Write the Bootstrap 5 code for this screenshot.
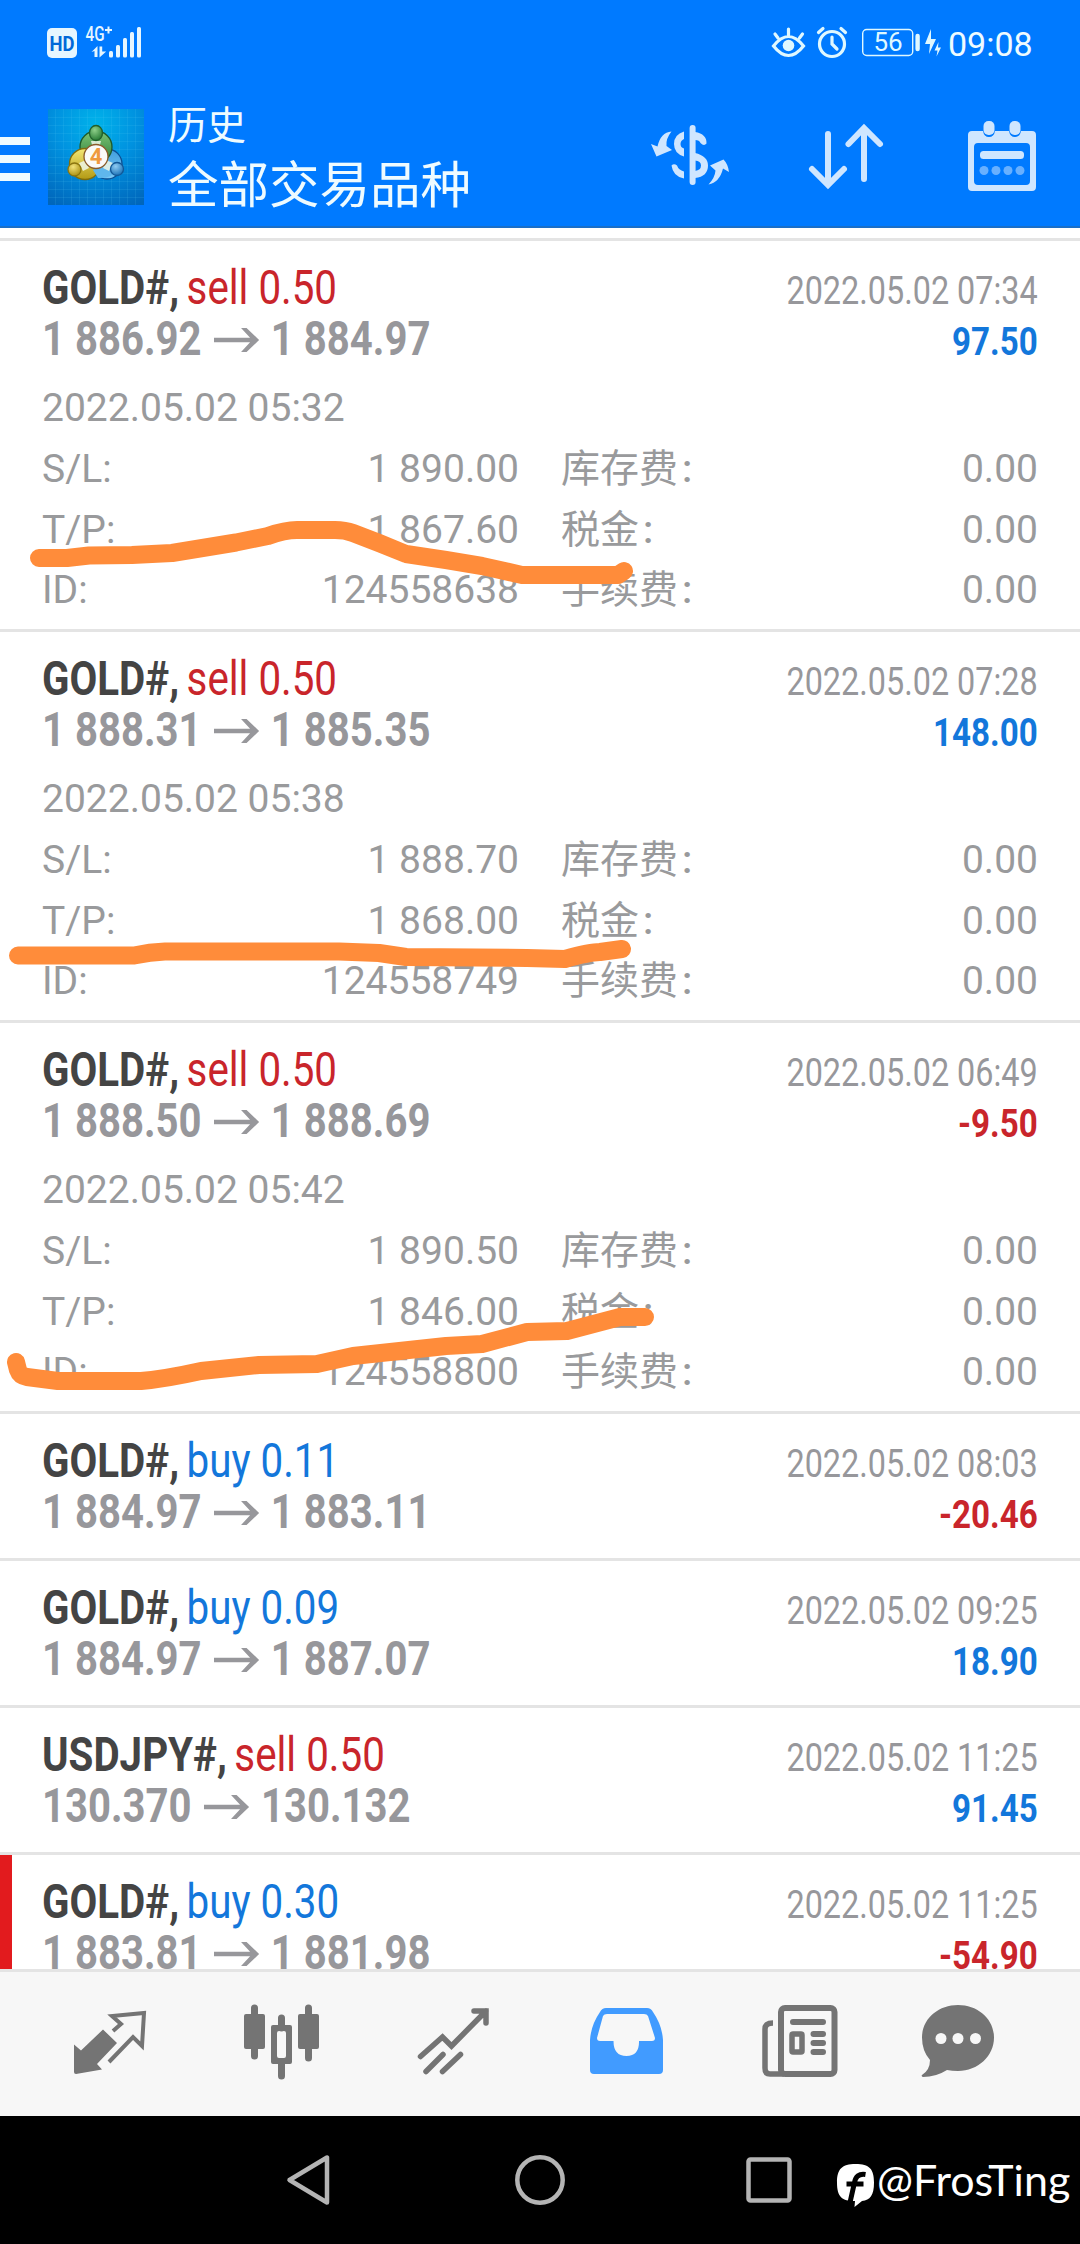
<!DOCTYPE html>
<html lang="zh-CN">
<head>
<meta charset="utf-8">
<meta name="viewport" content="width=device-width, initial-scale=1">
<title>历史</title>
<link href="https://cdn.jsdelivr.net/npm/bootstrap@5.3.0/dist/css/bootstrap.min.css" rel="stylesheet">
<style>
html,body{height:2244px;overflow:hidden}
body{font-family:Roboto,"Noto Sans CJK SC",sans-serif;background:#fff;color:#97979b;width:1080px}
svg{display:block;flex:none;overflow:visible}
.screen{height:2244px;width:1080px}
.topbar{background:#007aff;height:228px;border-bottom:2px solid #1a6fc8;color:#eefbff}
.statusbar{height:84px}
.clock-text{font-size:34px;line-height:1;padding:27px 0 0 2px}
.appbar{height:142px}
.titles{width:472px;padding-top:18px}
.t-small{font-size:39px;line-height:48px}
.t-big{font-size:50.5px;line-height:72px}
.list-area{height:1741px;overflow:hidden;padding-top:10px}
.deal{border-top:3px solid #e4e4e4;padding:21px 0 21px 42px;height:147px}
.deal.open{height:391px}
.deal.flagged{box-shadow:inset 12px 0 0 #e21b1e}
.head-l,.head-r{line-height:51px;white-space:nowrap}
.head-l{font-size:48px}
.sx{transform:scaleX(.84);transform-origin:0 0}
.side{margin-left:-3px}
.px{transform:scaleX(.835);transform-origin:0 0;font-weight:700}
.arrow{margin:0 14px 5px 15px}
.sym{font-weight:700;color:#444}
.sell{color:#c9252b}.buy{color:#1377db}
.head-r{font-size:39px;padding:4px 42px 0 0;text-align:right}
.dx{transform:scaleX(.83);transform-origin:100% 0}
.fx{transform:scaleX(.85);transform-origin:100% 0;font-weight:700}
.info{font-size:39px;line-height:60.75px;padding:10px 42px 0 0;color:#999a9c}
.info .col-half{width:477px}
.info .col-half+.col-half{margin-left:42px}
.colon{margin-left:4px;font-weight:500}
.tabs{height:147px;background:#f7f7f7;border-top:3px solid #e4e4e4;padding-left:24px}
.sysbar{height:128px;background:#000}
.wm{font-family:Lato,sans-serif;color:#fff;font-size:43px;line-height:1;white-space:nowrap;padding-top:42px;margin-left:-3px}
.marker{left:0;top:0;pointer-events:none}
</style>
</head>
<body>
<div class="screen d-flex flex-column position-relative">
<header class="topbar flex-shrink-0">
  <div class="statusbar d-flex">
    <svg width="760" height="84" viewBox="0 0 760 84" fill="#e6f6ff">
      <rect x="47" y="28" width="30" height="30" rx="5"/>
      <text x="62" y="50.500" font-size="20" font-weight="700" text-anchor="middle" textLength="25" lengthAdjust="spacingAndGlyphs" fill="#0068d8">HD</text>
      <text x="85.500" y="41" font-size="20" font-weight="500" textLength="19" lengthAdjust="spacingAndGlyphs">4G</text>
      <path d="M105 30h7M108.500 26.500v7" stroke="#e6f6ff" stroke-width="2"/>
      <path d="M91.500 52l6-6v11h-3v-6zM99.500 46.500h2.700v5h4l-6.700 6z"/>
      <rect x="109" y="51" width="4" height="6.500" rx="1.500"/><rect x="116" y="45" width="4" height="12.500" rx="1.500"/><rect x="123" y="38" width="4" height="19.500" rx="1.500"/><rect x="130" y="32" width="4" height="25.500" rx="1.500"/><rect x="137" y="27" width="4" height="30.500" rx="1.500"/>
    </svg>
    <svg width="186" height="84" viewBox="760 0 186 84" fill="none" stroke="#dff8ff" stroke-width="3.200" stroke-linecap="round">
      <path d="M773.500 46q15-19 30 0q-15 19-30 0zM775 34l3 4M788.500 29v6M802.500 34l-3 4"/>
      <circle cx="788.500" cy="45.500" r="5.800" fill="#dff8ff" stroke="none"/>
      <circle cx="832" cy="44" r="12.500"/><path d="M832 37v7l5 5M818.500 32.500l4.500-4M845.500 32.500l-4.500-4"/>
      <rect x="862.700" y="29.500" width="50" height="26" rx="4" stroke-width="1.400"/>
      <path d="M917.600 36v13" stroke-width="4.400"/>
      <text x="888" y="51" font-size="26" text-anchor="middle" fill="#dff8ff" stroke="none">56</text>
      <path d="M931 29l-6 15h5l-1 10 7-15h-5zM938.500 42l-4 8.500h3l-1 6 4.500-9h-3z" fill="#dff8ff" stroke="none"/>
    </svg>
    <div class="clock-text">09:08</div>
  </div>
  <div class="appbar d-flex">
    <svg width="168" height="142" viewBox="0 84 168 142">
      <defs>
        <radialGradient id="bgl" cx=".5" cy=".15" r=".95"><stop offset="0" stop-color="#00b2ea"/><stop offset=".45" stop-color="#0092e0"/><stop offset="1" stop-color="#0066bb"/></radialGradient>
        <linearGradient id="gg" x1="0" y1="0" x2="0" y2="1"><stop offset="0" stop-color="#7cc576"/><stop offset="1" stop-color="#2c7c38"/></linearGradient>
        <linearGradient id="gy" x1="0" y1="0" x2="0" y2="1"><stop offset="0" stop-color="#f3e673"/><stop offset="1" stop-color="#b39a14"/></linearGradient>
        <linearGradient id="gb" x1="0" y1="0" x2="0" y2="1"><stop offset="0" stop-color="#3f9ddd"/><stop offset="1" stop-color="#7cc9f4"/></linearGradient>
        <radialGradient id="hg" cx=".4" cy=".3" r=".7"><stop offset="0" stop-color="#8fd08a"/><stop offset="1" stop-color="#2a7c36"/></radialGradient>
        <radialGradient id="hy" cx=".4" cy=".3" r=".7"><stop offset="0" stop-color="#f2e27a"/><stop offset="1" stop-color="#ae9213"/></radialGradient>
        <radialGradient id="hb" cx=".4" cy=".3" r=".7"><stop offset="0" stop-color="#8fcbf2"/><stop offset="1" stop-color="#1e74b8"/></radialGradient>
      </defs>
      <path d="M0 137h30v8H0zM0 155h30v8H0zM0 173h30v8H0z" fill="#eefbff"/>
      <rect x="48" y="109" width="96" height="96" fill="url(#bgl)"/>
      <path d="M55.500 109v96M63.500 109v96M71.500 109v96M79.500 109v96M87.500 109v96M95.500 109v96M103.500 109v96M111.500 109v96M119.500 109v96M127.500 109v96M135.500 109v96M48 117.500h96M48 125.500h96M48 133.500h96M48 141.500h96M48 149.500h96M48 157.500h96M48 165.500h96M48 173.500h96M48 181.500h96M48 189.500h96M48 197.500h96" stroke="#5cd0f5" stroke-opacity=".13"/>
      <g stroke-width="1.300">
        <circle cx="107" cy="164" r="15" fill="url(#gb)" stroke="#0d4f93"/>
        <circle cx="96" cy="147" r="16" fill="url(#gg)" stroke="#1e5a2a"/>
        <circle cx="85" cy="164" r="15.500" fill="url(#gy)" stroke="#806d0c"/>
        <path d="M93 170l5 8q14 1 19-9l-9-9z" fill="#5fb6ec" stroke="none"/>
        <path d="M91 141h10l-2 8h-6zM79 163l4 8 6-3-3-8zM113 163l-4 8-6-3 3-8z" fill="#eef7e8" stroke="none" opacity=".85"/>
        <ellipse cx="96" cy="133" rx="6.500" ry="7.500" fill="url(#hg)" stroke="#215f2c"/>
        <circle cx="74.500" cy="169.500" r="6.500" fill="url(#hy)" stroke="#8b7510"/>
        <circle cx="117" cy="169" r="6.500" fill="url(#hb)" stroke="#125796"/>
        <circle cx="96" cy="156.500" r="12" fill="#fafaf8" stroke="#8a5b2a"/>
      </g>
      <text x="96" y="164" font-size="22" font-weight="700" text-anchor="middle" fill="#ef9a3e">4</text>
    </svg>
    <div class="titles d-flex flex-column">
      <div class="t-small">历史</div><div class="t-big">全部交易品种</div>
    </div>
    <svg width="440" height="142" viewBox="640 84 440 142" fill="none" stroke="#cfe6ff" stroke-width="6" stroke-linecap="round">
      <path d="M692.600 128v54"/>
      <path d="M684 131.500q-10 3-10 12.500t10 12.500v-8q-3.500-1-3.500-4.500t3.500-5zM671.500 165.500q2.500-2.500 5.500 0 1.500 4.500 7 6v7q-11-2-12.500-13z" fill="#cfe6ff" stroke="none"/>
      <path d="M695 132q12 2 11.500 11.500-2.500 3-6-.5-1-3-5.500-3zM695 153q13 3 13 12.500 0 11-13 12.500v-7q6-1 6-5.500t-6-5z" fill="#cfe6ff" stroke="none"/>
      <path d="M671.500 131.500q-11 1-14 15l-6.500-2.500 5.500 12.500 15.500-6.500-5.500-4q-1-7 5-14.500zM708.500 184.500q11-2 14.500-16l6 3.500q-1-8-5.500-12.500l-13.500 6 5.500 5q-.5 7-7 14z" fill="#cfe6ff" stroke="none"/>
      <path d="M828 134v50M812 169l16 16 16-16M864 179v-50M848.500 144l15.500-16 16 16"/>
      <g fill="#cfe6ff" stroke="none">
        <path fill-rule="evenodd" d="M972 131h11q1 6 6 6t6-6h14q1 6 6 6t6-6h11q4 0 4 4v52q0 4-4 4h-60q-4 0-4-4v-52q0-4 4-4zM978 143q-4 0-4 4v34q0 4 4 4h48q4 0 4-4v-34q0-4-4-4z"/>
        <rect x="983.500" y="121" width="11" height="14" rx="5"/><rect x="1009.500" y="121" width="11" height="14" rx="5"/>
        <rect x="980" y="151" width="44" height="8" rx="3.500"/>
        <g opacity=".5"><circle cx="984" cy="170.500" r="4.500"/><circle cx="996" cy="170.500" r="4.500"/><circle cx="1008" cy="170.500" r="4.500"/><circle cx="1020" cy="170.500" r="4.500"/></g>
      </g>
    </svg>
  </div>
</header>
<main class="list-area flex-shrink-0" id="deals"></main>
<nav class="tabs d-flex flex-shrink-0">
  <svg width="172" height="144" viewBox="24 1972 172 144" fill="#747474">
    <path d="M103 2029.500L117 2043 97 2064l5 5.500L76 2074q-2 0-2-2V2044.500l7 6z"/>
    <path d="M113 2031l8-7-9-8 32-3-2 33-9-9-24 25" fill="none" stroke="#747474" stroke-width="4"/>
  </svg>
  <svg width="172" height="144" viewBox="196 1972 172 144" fill="#747474">
    <rect x="244" y="2014" width="21" height="35" rx="2"/><rect x="298" y="2014" width="21" height="35" rx="2"/>
    <path d="M254.500 2008v48M308.500 2008v50M281.500 2018v10M281.500 2062v14" stroke="#747474" stroke-width="7" stroke-linecap="round"/>
    <path fill-rule="evenodd" d="M273 2025h17q2 0 2 2v35q0 2-2 2h-17q-2 0-2-2v-35q0-2 2-2zM279 2031q-2 0-2 2v23q0 2 2 2h5q2 0 2-2v-23q0-2-2-2z"/>
  </svg>
  <svg width="172" height="144" viewBox="368 1972 172 144" fill="none" stroke="#747474" stroke-width="5.500" stroke-linecap="round">
    <path d="M420.500 2056.500L442.500 2037l9 9L486 2011M474 2011h12v12"/><path d="M426 2071.500l17-17M442.500 2071.500l18-17" />
  </svg>
  <svg width="172" height="144" viewBox="540 1972 172 144" fill="#419bff">
    <path fill-rule="evenodd" d="M606 2008h41q4 0 6 4 9 13 10 28v30q0 4-4 4h-65q-4 0-4-4v-30q1-15 10-28 2-4 6-4zM607 2014q-3 0-4 2l-6 22q0 3 3 3h13.500q0 15 13 15t12.500-15h13q3 0 3-3l-7-22q-1-2-4-2z"/>
  </svg>
  <svg width="172" height="144" viewBox="712 1972 172 144" fill="none" stroke="#747474">
    <rect x="781" y="2008" width="53.500" height="66" rx="4" stroke-width="6"/>
    <path d="M773 2023q-8 0-8 6v39q0 6 5 6h14" stroke-width="5.500"/>
    <path d="M793 2022h30M813.500 2034h9.500M813.500 2043h9.500M813.500 2052h9.500" stroke-width="6" stroke-linecap="round"/>
    <rect x="792" y="2034" width="10" height="18" rx="1" stroke-width="5.500"/>
  </svg>
  <svg width="172" height="144" viewBox="884 1972 172 144">
    <path fill="#747474" d="M958 2005c20 0 36 14 36 32.500S978 2071 958 2071q-6 0-11-1-11 7-24 7-2-1-1-2 8-5 8-15-8-9-8-22.500C922 2019 938 2005 958 2005z"/>
    <g fill="#f7f7f7"><circle cx="941" cy="2038.500" r="5.500"/><circle cx="958" cy="2038.500" r="5.500"/><circle cx="975.500" cy="2038.500" r="5.500"/></g>
  </svg>
</nav>
<footer class="sysbar d-flex flex-shrink-0">
  <svg width="880" height="128" viewBox="0 2116 880 128" fill="none" stroke="#b4b4b4" stroke-width="4.500" stroke-linejoin="round">
    <path d="M289.500 2180L327 2157.500v45z"/><circle cx="540" cy="2180" r="22.700"/><rect x="748.500" y="2159.500" width="41" height="41" rx="2"/>
    <path fill="#fff" stroke="none" d="M855.500 2164c14 0 18.500 5 18.500 18.500 0 13-4 17.500-12 18.500l-7.500 6 .5-6c-13 0-18-4-18-18.500 0-13.500 5-18.500 18.500-18.500z"/>
    <path d="M865.500 2174.500q-9.500-1.500-11 8l-4.500 20M846.500 2184h17" stroke="#000" stroke-width="5"/>
  </svg>
  <div class="wm">@FrosTing</div>
</footer>
<svg class="marker position-absolute" width="1080" height="1500" viewBox="0 0 1080 1500" fill="none" stroke="#ff8c3a" stroke-width="18" stroke-linecap="round" stroke-linejoin="round">
  <path d="M39 558H67L89 555.500 132 555 172 553 236 542.500 268 536Q285 530 297 530H335Q345 530 353 533L379 543 406 554 446 560 482 566 522 575H618L624 571"/>
  <path d="M18 955.500H134Q150 952 165 951.500H339L379 953 406 957 527 958 565 959Q590 952 600 952L622 949"/>
  <path d="M16 1362L18 1370Q20 1376 27 1377L58 1381H141Q165 1379 201 1371L259 1365 317 1364 353 1356 446 1346 482 1344 527 1332 567 1331 620 1317H645"/>
</svg>
</div>
<script>
const deals=[
 ['GOLD#','sell','0.50','1 886.92','1 884.97','07:34','97.50',['05:32','1 890.00','1 867.60','124558638']],
 ['GOLD#','sell','0.50','1 888.31','1 885.35','07:28','148.00',['05:38','1 888.70','1 868.00','124558749']],
 ['GOLD#','sell','0.50','1 888.50','1 888.69','06:49','-9.50',['05:42','1 890.50','1 846.00','124558800']],
 ['GOLD#','buy','0.11','1 884.97','1 883.11','08:03','-20.46'],
 ['GOLD#','buy','0.09','1 884.97','1 887.07','09:25','18.90'],
 ['USDJPY#','sell','0.50','130.370','130.132','11:25','91.45'],
 ['GOLD#','buy','0.30','1 883.81','1 881.98','11:25','-54.90']];
const arrow='<svg class="arrow d-inline-block" width="54" height="26" viewBox="0 0 45 26" preserveAspectRatio="none"><path d="M0 10.700H36L27 1H32.500L45 13 32.500 25H27L36 15.300H0z" fill="#97979b"/></svg>';
const row=(k,v)=>`<div class="d-flex justify-content-between"><span>${k}</span><span>${v}</span></div>`;
const cn=t=>`${t}<span class="colon">:</span>`;
document.getElementById('deals').innerHTML=deals.map((d,i)=>`<article class="deal ${d[7]?'open':''} ${i===6?'flagged':''}">
<div class="d-flex justify-content-between"><div class="head-l"><div class="sx"><span class="sym">${d[0]},</span> <span class="side ${d[1]}">${d[1]} ${d[2]}</span></div><div class="px">${d[3]}${arrow}${d[4]}</div></div>
<div class="head-r"><div class="dx">2022.05.02 ${d[5]}</div><div class="fx ${d[6][0]==='-'?'sell':'buy'}">${d[6]}</div></div></div>
${d[7]?`<div class="info"><div>2022.05.02 ${d[7][0]}</div><div class="d-flex"><div class="col-half">${row('S/L:',d[7][1])+row('T/P:',d[7][2])+row('ID:',d[7][3])}</div><div class="col-half">${row(cn('库存费'),'0.00')+row(cn('税金'),'0.00')+row(cn('手续费'),'0.00')}</div></div></div>`:''}
</article>`).join('');
</script>
<script src="https://cdn.jsdelivr.net/npm/bootstrap@5.3.0/dist/js/bootstrap.bundle.min.js"></script>
</body>
</html>
